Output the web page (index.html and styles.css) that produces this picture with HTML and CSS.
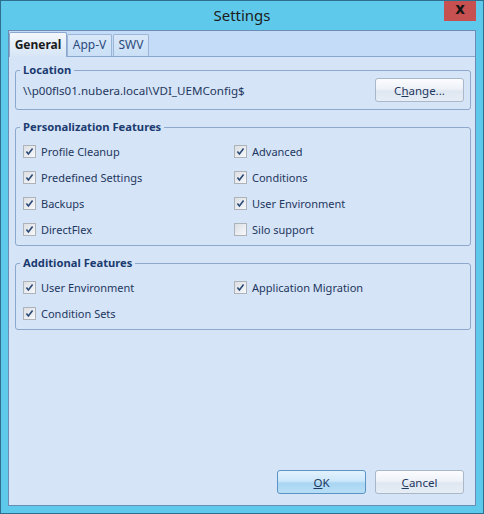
FILE: index.html
```html
<!DOCTYPE html>
<html lang="en">
<head>
  <meta charset="UTF-8">
  <title>Settings</title>
  <link rel="stylesheet" href="styles.css">
</head>
<body>
  <div class="window">
    <div class="titlebar">
      <div class="title">Settings</div>
      <div class="close">x</div>
    </div>

    <div class="client">
      <!-- tab strip -->
      <div class="tabs">
        <div class="tab active">General</div>
        <div class="tab tab-appv">App-V</div>
        <div class="tab tab-swv">SWV</div>
      </div>

      <div class="page">
        <fieldset class="group">
          <legend>Location</legend>
          <div class="location-row">
            <span class="path">\\p00fls01.nubera.local\VDI_UEMConfig$</span>
            <button class="button">C<u>h</u>ange...</button>
          </div>
        </fieldset>

        <fieldset class="group">
          <legend>Personalization Features</legend>
          <div class="checks">
            <label class="check"><span class="box on"></span>Profile Cleanup</label>
            <label class="check"><span class="box on"></span>Advanced</label>
            <label class="check"><span class="box on"></span>Predefined Settings</label>
            <label class="check"><span class="box on"></span>Conditions</label>
            <label class="check"><span class="box on"></span>Backups</label>
            <label class="check"><span class="box on"></span>User Environment</label>
            <label class="check"><span class="box on"></span>DirectFlex</label>
            <label class="check"><span class="box"></span>Silo support</label>
          </div>
        </fieldset>

        <fieldset class="group">
          <legend>Additional Features</legend>
          <div class="checks">
            <label class="check"><span class="box on"></span>User Environment</label>
            <label class="check"><span class="box on"></span>Application Migration</label>
            <label class="check"><span class="box on"></span>Condition Sets</label>
          </div>
        </fieldset>

        <div class="actions">
          <button class="button default"><u>O</u>K</button>
          <button class="button"><u>C</u>ancel</button>
        </div>
      </div>
    </div>
  </div>

  <script>
    // put the tick mark into every checked box
    var tick = '<svg width="11" height="11" viewBox="0 0 11 11"><path d="M2.4 5.6 L4.4 8 L8.6 2.6" fill="none" stroke="#2b4a78" stroke-width="1.6"/></svg>';
    document.querySelectorAll('.box.on').forEach(function (b) {
      b.innerHTML = tick;
    });
  </script>
</body>
</html>
```

FILE: styles.css
```css
* {
  box-sizing: border-box;
}

html, body {
  margin: 0;
}

body {
  font-family: "Noto Sans", "Segoe UI", sans-serif;
  font-size: 11px;
  color: #1e375f;
  background: #5fc9eb;
}

.window {
  width: 484px;
  height: 514px;
  border: 1px solid #2c6f8f;
  background: #5fc9eb;
  display: flex;
  flex-direction: column;
}

.titlebar {
  height: 29px;
  display: grid;
  grid-template-columns: 1fr auto 1fr;
  align-items: start;
}

.title {
  grid-column: 2;
  font-size: 15px;
  line-height: 29px;
  color: #1c1c1c;
}

.close {
  grid-column: 3;
  justify-self: end;
  margin-right: 7px;
  width: 32px;
  height: 20px;
  background: #c75050;
  color: #151515;
  font-family: "DejaVu Sans", sans-serif;
  font-weight: bold;
  font-size: 15px;
  line-height: 17px;
  text-align: center;
}

.client {
  flex: 1;
  margin: 0 7px 7px 7px;
  border: 1px solid #6a8db5;
  background: #c4dcf7;
  display: flex;
  flex-direction: column;
}

.tabs {
  height: 25px;
  display: flex;
  align-items: flex-end;
  font-size: 12px;
}

.tab {
  height: 22px;
  line-height: 20px;
  text-align: center;
  border: 1px solid #9ab5d5;
  border-bottom: none;
  border-radius: 2px 2px 0 0;
  background: linear-gradient(#d9e8f9, #cadff6);
  color: #2a4a7c;
}

.tab.active {
  width: 58px;
  height: 25px;
  line-height: 24px;
  margin-bottom: -1px;
  position: relative;
  z-index: 1;
  font-weight: bold;
  color: #1a1a1a;
  border-color: #8aa8cf;
  background: linear-gradient(#f3f7fc, #d6e5f6);
}

.tab-appv {
  width: 45px;
}

.tab-swv {
  width: 36px;
  margin-left: 1px;
}

.page {
  flex: 1;
  border-top: 1px solid #8aa8cf;
  background: #d5e4f6;
  padding: 5px 4px 11px 6px;
  display: flex;
  flex-direction: column;
}

.group {
  margin: 0 0 9px 0;
  border: 1px solid #8da8cc;
  border-radius: 3px;
  padding: 0 6px 7px 7px;
  min-width: 0;
}

.group legend {
  font-size: 11.2px;
  font-weight: bold;
  color: #1b3b70;
  padding: 0 3px;
  margin-left: -3px;
  line-height: 16px;
}

.location-row {
  height: 24px;
  display: flex;
  align-items: center;
  justify-content: space-between;
}

.path {
  font-size: 11.6px;
  color: #1e375f;
}

.checks {
  display: grid;
  grid-template-columns: 211px 1fr;
  grid-auto-rows: 26px;
  padding-top: 3px;
  margin-bottom: -4px;
}

.check {
  display: flex;
  align-items: center;
  gap: 5px;
  color: #1e375f;
}

.box {
  width: 13px;
  height: 13px;
  border: 1px solid #aeb3ba;
  background: linear-gradient(135deg, #dcdfe3, #f7f8fa);
  display: flex;
  align-items: center;
  justify-content: center;
}

.actions {
  margin-top: auto;
  display: flex;
  justify-content: flex-end;
  gap: 9px;
  padding-right: 7px;
}

.button {
  width: 89px;
  height: 24px;
  padding: 0;
  font-family: inherit;
  font-size: 11.5px;
  color: #1e375f;
  border: 1px solid #aab7c8;
  border-radius: 3px;
  background: linear-gradient(#fbfcfe, #eef2f8 45%, #dfe7f1 55%, #e6edf5);
  cursor: pointer;
}

.button.default {
  border-color: #5b93c4;
  background: linear-gradient(#e2f2fd, #cde8fa 45%, #a9d6f4 55%, #b8def6);
}
```
